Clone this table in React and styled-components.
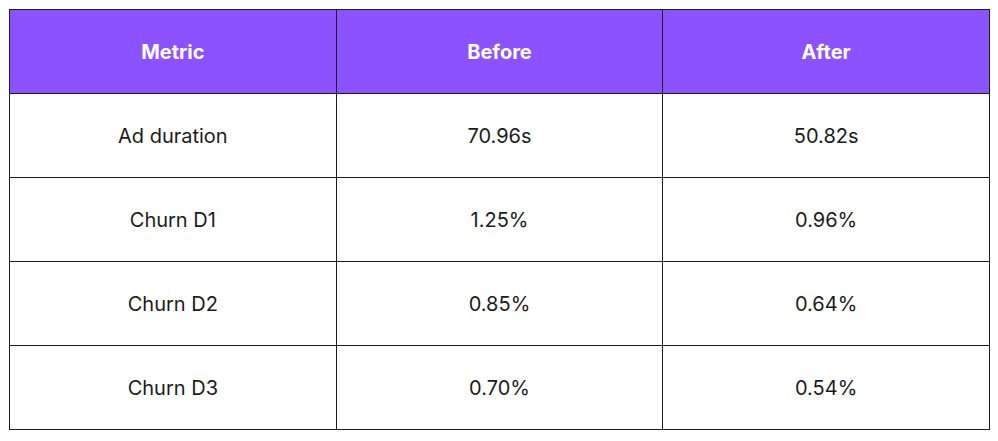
import React from "react"
import styled, { createGlobalStyle } from "styled-components"

const GlobalStyle = createGlobalStyle`
  html, body {
    margin: 0;
    padding: 0;
    background: #ffffff;
  }
  body {
    font-family: Inter, "Noto Sans", "Liberation Sans", sans-serif;
  }
`

const Page = styled.div`
  width: 998px;
  height: 441px;
  box-sizing: border-box;
  padding: 9px 8px 0 9px;
`

const Table = styled.table`
  width: 981px;
  border-collapse: collapse;
  table-layout: fixed;
`

const HeadCell = styled.th`
  height: 83px;
  padding: 0;
  background: #8c52ff;
  color: #ffffff;
  font-size: 20px;
  font-weight: 700;
  text-align: center;
  border: 1.5px solid #1c1c1c;
`

const Cell = styled.td`
  height: 83px;
  padding: 0;
  color: #1c1c1c;
  font-size: 20px;
  font-weight: 400;
  text-align: center;
  border: 1.5px solid #1c1c1c;
`

const rows = [
  ["Ad duration", "70.96s", "50.82s"],
  ["Churn D1", "1.25%", "0.96%"],
  ["Churn D2", "0.85%", "0.64%"],
  ["Churn D3", "0.70%", "0.54%"],
]

const App = () => {
  return (
    <Page>
      <GlobalStyle />
      <Table>
        <thead>
          <tr>
            <HeadCell>Metric</HeadCell>
            <HeadCell>Before</HeadCell>
            <HeadCell>After</HeadCell>
          </tr>
        </thead>
        <tbody>
          {rows.map((row) => (
            <tr key={row[0]}>
              {row.map((value, i) => (
                <Cell key={i}>{value}</Cell>
              ))}
            </tr>
          ))}
        </tbody>
      </Table>
    </Page>
  )
}

export default App
